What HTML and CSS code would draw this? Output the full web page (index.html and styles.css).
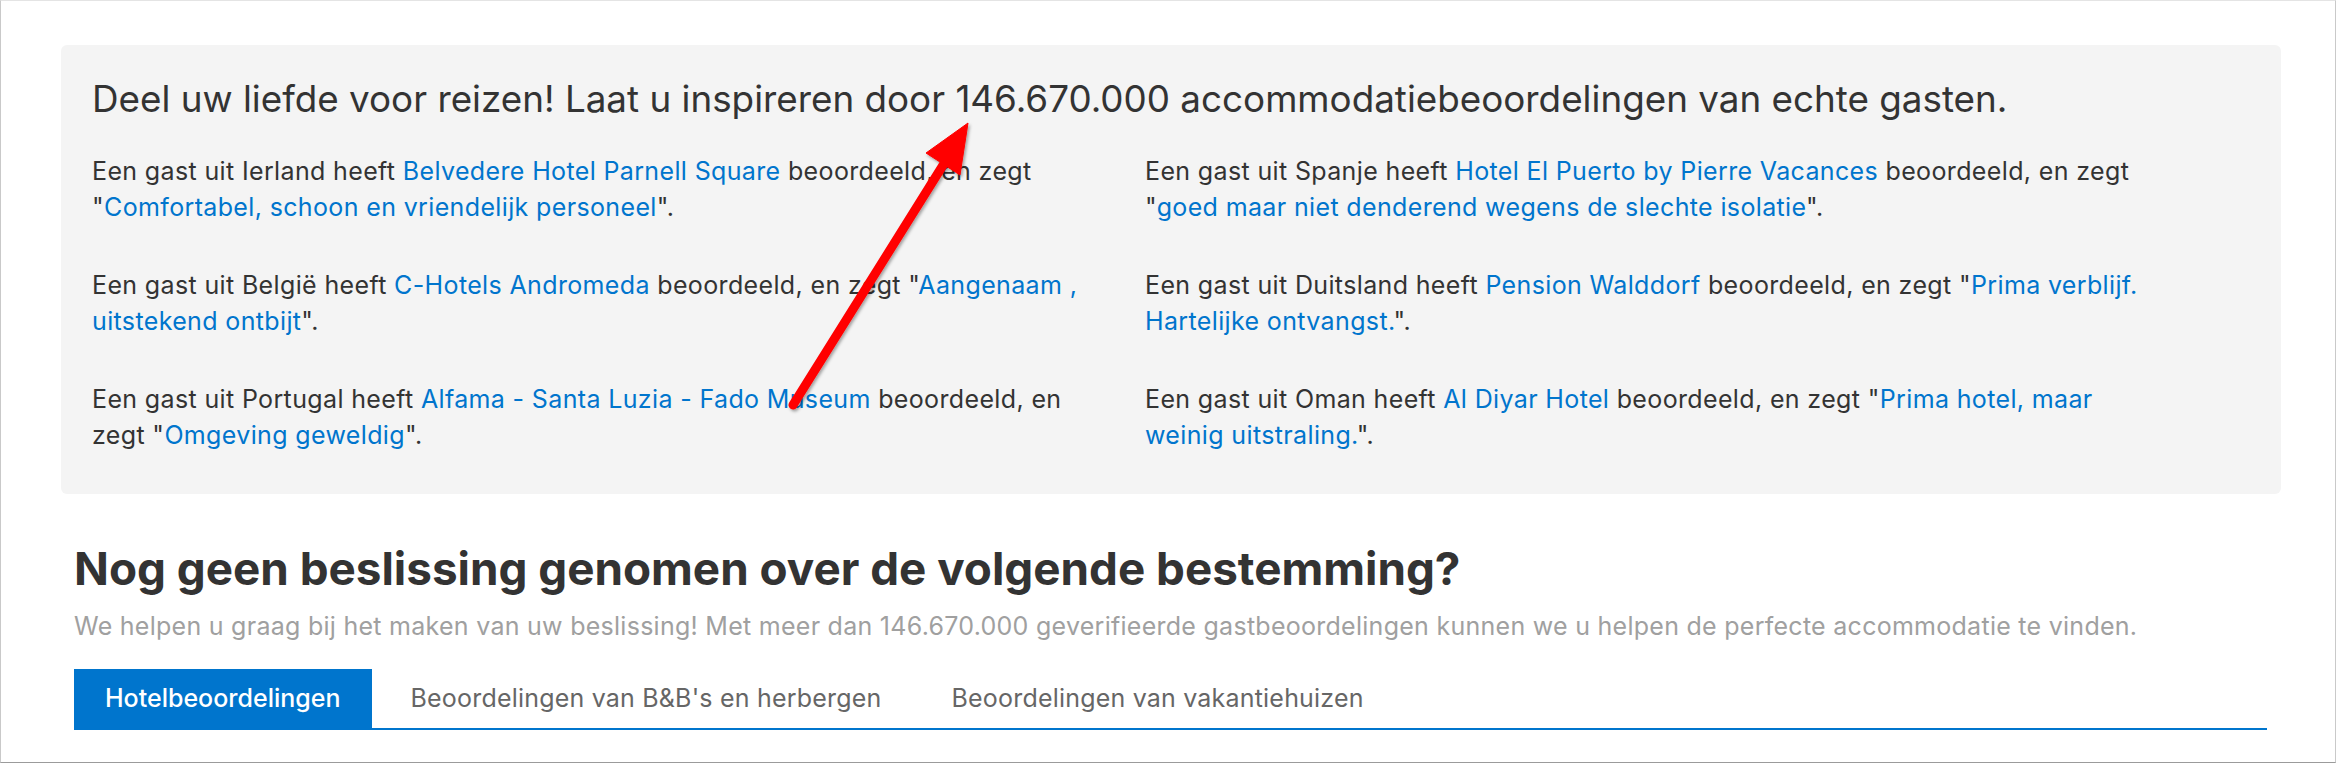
FILE: index.html
```html
<!DOCTYPE html>
<html lang="nl">
<head>
    <meta charset="UTF-8">
    <meta name="viewport" content="width=device-width, initial-scale=1.0">
    <title>Beoordelingen van gasten</title>
    <link rel="stylesheet" href="styles.css">
</head>
<body>
    <div class="window">
        <div class="inspire">
            <h2>Deel uw liefde voor reizen! Laat u inspireren door 146.670.000 accommodatiebeoordelingen van echte gasten.</h2>
            <div class="reviews">
                <p>Een gast uit Ierland heeft <a href="#">Belvedere Hotel Parnell Square</a> beoordeeld, en zegt "<a href="#">Comfortabel, schoon en vriendelijk personeel</a>".</p>
                <p>Een gast uit Spanje heeft <a href="#">Hotel El Puerto by Pierre Vacances</a> beoordeeld, en zegt "<a href="#">goed maar niet denderend wegens de slechte isolatie</a>".</p>
                <p>Een gast uit België heeft <a href="#">C-Hotels Andromeda</a> beoordeeld, en zegt "<a href="#">Aangenaam , uitstekend ontbijt</a>".</p>
                <p>Een gast uit Duitsland heeft <a href="#">Pension Walddorf</a> beoordeeld, en zegt "<a href="#">Prima verblijf. Hartelijke ontvangst.</a>".</p>
                <p>Een gast uit Portugal heeft <a href="#">Alfama - Santa Luzia - Fado Museum</a> beoordeeld, en zegt "<a href="#">Omgeving geweldig</a>".</p>
                <p>Een gast uit Oman heeft <a href="#">Al Diyar Hotel</a> beoordeeld, en zegt "<a href="#">Prima hotel, maar weinig uitstraling.</a>".</p>
            </div>
        </div>

        <div class="pick">
            <h2>Nog geen beslissing genomen over de volgende bestemming?</h2>
            <p class="lead">We helpen u graag bij het maken van uw beslissing! Met meer dan 146.670.000 geverifieerde gastbeoordelingen kunnen we u helpen de perfecte accommodatie te vinden.</p>
            <ul class="tabs">
                <li class="active"><a href="#">Hotelbeoordelingen</a></li>
                <li><a href="#">Beoordelingen van B&amp;B's en herbergen</a></li>
                <li><a href="#">Beoordelingen van vakantiehuizen</a></li>
            </ul>
        </div>
    </div>

    <!-- red pointer drawn over the headline counter -->
    <svg class="arrow" width="2338" height="764" viewBox="0 0 2338 764">
        <defs>
            <filter id="shade" x="-20%" y="-20%" width="140%" height="140%">
                <feDropShadow dx="1.5" dy="2" stdDeviation="1.5" flood-color="#000" flood-opacity="0.35"/>
            </filter>
        </defs>
        <g filter="url(#shade)" fill="#ff0000" stroke="#ff0000">
            <line x1="793" y1="405" x2="945" y2="162" stroke-width="9" stroke-linecap="round"/>
            <polygon points="968,123 926,153 960,175" stroke-width="1" stroke-linejoin="round"/>
        </g>
    </svg>
</body>
</html>
```

FILE: styles.css
```css
body {
    margin: 0;
    font-family: Inter, "Noto Sans", "Liberation Sans", sans-serif;
    color: #333;
    background: #fff;
}
.window {
    box-sizing: border-box;
    width: 2336px;
    height: 763px;
    border: 1px solid #c9c9c9;
    border-top-color: #e4e4e4;
    border-bottom-color: #9b9b9b;
    padding: 44px 54px 0 60px;
    overflow: hidden;
}
a {
    color: #0075cd;
    text-decoration: none;
}
.inspire {
    background-color: #f4f4f4;
    border-radius: 6px;
    padding: 32px 31px 41px;
}
.inspire h2 {
    margin: 0 0 32px;
    font-size: 36.8px;
    font-weight: 400;
    line-height: 44px;
}
.reviews {
    display: grid;
    grid-template-columns: 1005px 1005px;
    column-gap: 48px;
    row-gap: 42px;
}
.reviews p {
    margin: 0;
    font-size: 25px;
    letter-spacing: 0.36px;
    line-height: 36px;
}
.pick {
    padding: 0 14px 0 13px;
}
.pick h2 {
    margin: 49px 0 15px;
    font-size: 45.8px;
    font-weight: 700;
    line-height: 52px;
}
.lead {
    margin: 0;
    font-size: 25px;
    letter-spacing: 0.27px;
    line-height: 32px;
    color: #a0a0a0;
}
.tabs {
    display: flex;
    list-style: none;
    margin: 27px 0 0;
    padding: 0;
    border-bottom: 2px solid #0075cd;
}
.tabs li {
    margin-right: 8px;
}
.tabs a {
    display: block;
    padding: 0 31px;
    font-size: 25px;
    letter-spacing: 0.2px;
    line-height: 59px;
    color: #666;
}
.tabs .active a {
    background-color: #0075cd;
    color: #fff;
    font-weight: 500;
    letter-spacing: 0;
}
.arrow {
    position: absolute;
    top: 0;
    left: 0;
    pointer-events: none;
}
```
